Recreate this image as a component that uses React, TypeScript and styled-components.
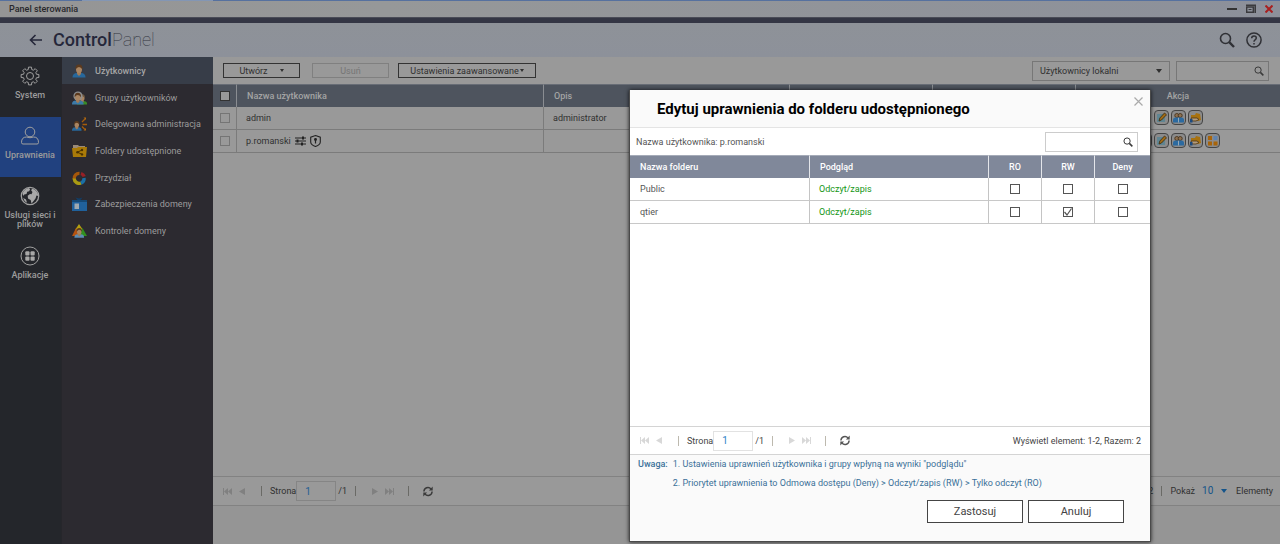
import React from 'react';
import styled, { createGlobalStyle, css } from 'styled-components';

const GlobalStyle = createGlobalStyle`
  *, *::before, *::after { box-sizing: border-box; }
  html, body, #root { margin: 0; padding: 0; }
  body { font-family: Roboto, "Liberation Sans", sans-serif; font-size: 9px; line-height: 12px; color: #303030; background: #959595; }
  button, input, select { font: inherit; color: inherit; margin: 0; padding: 0; border-radius: 0; }
  svg { display: block; flex: none; }
  h1, h2, p { margin: 0; }
`;

/* ---------- window frame ---------- */

const Window = styled.div`
  position: relative;
  min-height: 100vh;
  display: flex;
  flex-direction: column;
`;

const Desktop = styled.div`
  height: 1px;
  background: linear-gradient(90deg, #56719f 0 82px, #8396b4 82px 213px, #56719f 213px);
`;

const TitleBar = styled.header`
  height: 16px;
  padding: 0 7px 0 9px;
  display: flex;
  align-items: center;
  justify-content: space-between;
  color: #28282c;
  font-weight: 500;
  background: linear-gradient(90deg, #959595, #969899 30%, #8c909a);
`;

const WindowButtons = styled.div`
  display: flex;
  align-items: center;
  gap: 9px;
`;

const IconButton = styled.button`
  border: 0;
  background: none;
  display: flex;
  align-items: center;
  justify-content: center;
  color: inherit;
`;

const Band = styled.div`
  height: 6px;
  background: #343644;
  border-top: 1px solid #4a4c57;
`;

const AppBar = styled.div`
  height: 34px;
  padding: 0 18px 0 29px;
  display: flex;
  align-items: center;
  gap: 11px;
  color: #25273a;
  background: linear-gradient(#8e9298, #8d919a);
`;

const Brand = styled.h1`
  flex: 1;
  font-size: 18px;
  line-height: 24px;
  font-weight: 500;
  span { font-weight: 100; color: #34363f; }
`;

const AppBarTools = styled.div`
  display: flex;
  gap: 11px;
  color: #303136;
`;

const Body = styled.div`
  flex: 1;
  display: flex;
`;

/* ---------- navigation ---------- */

const Rail = styled.nav`
  width: 61px;
  flex: none;
  background: #24262b;
`;

const RailLink = styled.a<{ $active?: boolean }>`
  height: 60px;
  padding: 9px 1px 0 0;
  display: flex;
  flex-direction: column;
  align-items: center;
  gap: 5px;
  text-align: center;
  text-decoration: none;
  font-weight: 500;
  line-height: 9px;
  color: #9c9c9c;
  background: ${p => (p.$active ? '#21417f' : 'transparent')};
  span { max-width: 54px; }
`;

const SubNav = styled.nav`
  width: 152px;
  flex: none;
  background: #2c2a30;
  border-left: 1px solid #26262b;
`;

const SubNavList = styled.div`
  height: 187px;
  display: flex;
  flex-direction: column;
`;

const SubNavLink = styled.a<{ $active?: boolean }>`
  flex: 1;
  padding: 1px 0 0 10px;
  display: flex;
  align-items: center;
  gap: 8px;
  white-space: nowrap;
  font-weight: ${p => (p.$active ? 500 : 400)};
  color: ${p => (p.$active ? '#a6a6a6' : '#9c9c9c')};
  text-decoration: none;
  background: ${p => (p.$active ? '#373d48' : 'transparent')};
`;

/* ---------- user list ---------- */

const Main = styled.main`
  flex: 1;
  min-width: 0;
  display: flex;
  flex-direction: column;
  background: #999;
`;

const Toolbar = styled.div`
  height: 27px;
  padding: 0 11px 0 10px;
  display: flex;
  align-items: center;
`;

const ToolButton = styled.button<{ $width: number; $gap: number }>`
  width: ${p => p.$width}px;
  height: 15px;
  border: 1px solid #333;
  background: transparent;
  display: flex;
  align-items: center;
  justify-content: center;
  gap: ${p => p.$gap}px;
  white-space: nowrap;
  margin-right: 9px;
  &:disabled { color: #757575; border-color: #808080; margin-left: 3px; }
`;

const Caret = styled.i<{ $size?: number }>`
  width: 0;
  height: 0;
  flex: none;
  border: solid transparent;
  border-width: ${p => (p.$size ?? 2) + 1}px ${p => p.$size ?? 2}px 0;
  border-top-color: currentColor;
`;

const SelectBox = styled.span`
  width: 138px;
  height: 20px;
  margin: 0 6px 0 auto;
  padding-right: 7px;
  display: flex;
  align-items: center;
  border: 1px solid #777;
`;

const PlainSelect = styled.select`
  flex: 1;
  height: 100%;
  padding-left: 7px;
  border: 0;
  appearance: none;
  background: transparent;
`;

const SearchBox = styled.label<{ $light?: boolean }>`
  width: 93px;
  height: 20px;
  padding-right: 4px;
  display: flex;
  align-items: center;
  border: 1px solid ${p => (p.$light ? '#ccc' : '#777')};
  color: #3a3a3a;
  input { flex: 1; min-width: 0; border: 0; outline: 0; background: transparent; padding-left: 4px; }
`;

const Table = styled.table<{ $light?: boolean }>`
  width: 100%;
  table-layout: fixed;
  border-collapse: separate;
  border-spacing: 0;
  th {
    height: 23px;
    padding: 0 10px;
    text-align: left;
    font-weight: 500;
    color: ${p => (p.$light ? '#fff' : '#a4a4a4')};
    background: ${p => (p.$light ? '#80889a' : '#4e545e')};
    border-top: 1px solid ${p => (p.$light ? '#a5abb8' : '#686d76')};
  }
  th + th { border-left: 1px solid ${p => (p.$light ? '#e4e6ea' : '#8a8d92')}; }
  td {
    height: 23px;
    padding: 0 9px;
    border-bottom: 1px solid ${p => (p.$light ? '#c8c8c8' : '#7b7b7b')};
    color: ${p => (p.$light ? '#555' : '#303030')};
  }
  td:first-child { padding-left: 10px; }
  td + td { border-left: 1px solid ${p => (p.$light ? '#c4c4c4' : '#7b7b7b')}; }
  th.center { padding: 0; text-align: center; }
  th.tick, td.tick { padding: 0 0 0 7px; }
  td.actions { padding: 0 0 2px; border-left: 0; }
`;

const Check = styled.input.attrs({ type: 'checkbox' })<{ $tone: 'head' | 'dim' | 'light' }>`
  appearance: none;
  width: 10px;
  height: 10px;
  display: block;
  border: 1px solid #757575;
  ${p => p.$tone === 'head' && css`background: #999; border-color: #333;`}
  ${p => p.$tone === 'light' && css`border-color: #555; background: #fff;`}
`;

const CheckSlot = styled.span`
  display: grid;
  place-content: center;
  place-items: center;
  > * { grid-area: 1 / 1; }
  svg { pointer-events: none; z-index: 1; }
`;

const UserName = styled.span`
  display: flex;
  align-items: center;
  gap: 4px;
`;

const Actions = styled.div`
  display: grid;
  grid-template-columns: repeat(5, 15px);
  gap: 2px;
  padding-left: 62px;
`;

const ActionButton = styled.button<{ $slot: number }>`
  grid-row: 1;
  grid-column: ${p => p.$slot};
  width: 15px;
  height: 15px;
  border: 1px solid #454545;
  border-radius: 4px;
  background: #8b8b8b;
  display: flex;
  align-items: center;
  justify-content: center;
`;

const PagerBar = styled.div<{ $light?: boolean }>`
  height: ${p => (p.$light ? 29 : 30)}px;
  margin-top: auto;
  padding: 0 ${p => (p.$light ? 9 : 7)}px 0 10px;
  display: flex;
  align-items: center;
  border: solid ${p => (p.$light ? '#d4d4d4' : '#828282')};
  border-width: 1px 0;
  white-space: nowrap;
  color: ${p => (p.$light ? '#444' : '#303030')};
`;

const PageStep = styled(IconButton)<{ $light?: boolean }>`
  width: 9px;
  height: 12px;
  margin-right: 6px;
  color: ${p => (p.$light ? '#d8d8d8' : '#808080')};
`;

const Separator = styled.i<{ $light?: boolean }>`
  width: 1px;
  height: 10px;
  margin: 0 8px;
  background: ${p => (p.$light ? '#bdb9ae' : '#6a6a66')};
`;

const Gap = styled.span`
  width: 6px;
`;

const PageField = styled.label`
  display: flex;
  align-items: center;
`;

const PageInput = styled.input<{ $light?: boolean }>`
  width: 40px;
  height: 20px;
  margin-right: 2px;
  padding-left: 8px;
  border: 1px solid ${p => (p.$light ? '#e2e2e2' : '#858585')};
  background: transparent;
  color: ${p => (p.$light ? '#2a83c8' : '#1f5f94')};
  font-size: 10px;
`;

const PagerEnd = styled.div`
  margin-left: auto;
  display: flex;
  align-items: center;
`;

const CountSelect = styled.label`
  display: flex;
  align-items: center;
  gap: 7px;
  margin-right: 9px;
  select { border: 0; appearance: none; background: transparent; color: #14548a; font-size: 10px; width: 12px; }
  i { color: #14548a; }
`;

const BottomSpace = styled.div`
  height: 38px;
  background: #959595;
`;

/* ---------- dialog ---------- */

const Dialog = styled.section`
  position: absolute;
  top: 90px;
  right: 129px;
  bottom: 2px;
  width: 522px;
  min-height: 440px;
  display: flex;
  flex-direction: column;
  background: #fff;
  border: solid #4a4a4a;
  border-width: 0 1px 1px;
  box-shadow: 0 0 4px rgba(0, 0, 0, 0.8);
`;

const DialogHead = styled.div`
  height: 38px;
  padding: 0 7px 0 27px;
  display: flex;
  justify-content: space-between;
  align-items: center;
  background: #fafafa;
  border-bottom: 1px solid #e4e4e4;
  color: #000;
  h2 { font-size: 15px; line-height: 20px; font-weight: 700; }
`;

const CloseButton = styled(IconButton)`
  align-self: flex-start;
  margin-top: 7px;
  color: #aaa;
`;

const DialogTools = styled.div`
  height: 27px;
  padding: 0 12px 0 6px;
  display: flex;
  align-items: center;
  justify-content: space-between;
  color: #555;
`;

const Access = styled.span`
  color: #149614;
`;

const DialogFoot = styled.div`
  height: 86px;
  padding: 2px 26px 0 8px;
  background: #fafafa;
`;

const Note = styled.div`
  display: flex;
  gap: 5px;
  line-height: 14px;
  color: #3a7199;
  strong { font-weight: 500; }
  p { margin-bottom: 5px; }
`;

const DialogButtons = styled.div`
  display: flex;
  justify-content: flex-end;
  gap: 5px;
  margin-top: 5px;
`;

const DialogButton = styled.button`
  width: 96px;
  height: 23px;
  border: 1px solid #444;
  background: #fff;
  color: #444;
  font-size: 11px;
`;

/* ---------- drawings ---------- */

const Magnifier = ({ size }: { size: number }) => (
  <svg width={size} height={size} viewBox="0 0 16 16" fill="none" stroke="currentColor">
    <circle cx="6.5" cy="6.5" r="5" strokeWidth="1.6" />
    <path d="M10.2 10.2 15 15" strokeWidth="2.4" />
  </svg>
);

const PersonShape = ({ x = 0, s = 1, body = '#27689c', hair = '#5b3a1e' }) => (
  <g transform={`translate(${x} ${14 - 14 * s}) scale(${s})`}>
    <path d="M.5 13.500q0-4.500 4.500-4.500h4q4.500 0 4.500 4.500z" fill={body} />
    <path d="M5 8h4v2l-2 2-2-2z" fill="#a17a58" />
    <ellipse cx="7" cy="5.500" rx="3" ry="3.500" fill="#a98562" />
    <path d="M3.500 5.500q-.5-5 3.500-5t3.500 5q-1.500-2.500-3.500-2.500T3.500 5.500z" fill={hair} />
  </g>
);

const menuIcons: Record<string, React.ReactNode> = {
  user: <PersonShape />,
  group: (
    <>
      <PersonShape x={4.5} s={0.8} body="#398a27" hair="#6e5840" />
      <ellipse cx="6" cy="5" rx="4.600" ry="4.600" fill="#8f8f8f" />
      <PersonShape x={-0.5} s={0.9} body="#3c7aa8" />
    </>
  ),
  delegate: (
    <>
      <PersonShape x={-0.5} s={0.75} />
      <path d="M10 5l3-3M10.500 7.500H15M10 9.500l3 3" stroke="#a55c0a" strokeWidth="1.300" />
      <path d="M11.500.5H14V3zM11.500 13.500H14V11z" fill="#b36a10" />
    </>
  ),
  folder: (
    <>
      <path d="M1 1h5l1 1h6v4H1z" fill="#9b8a77" />
      <path d="M0 4h5l1-1h9l-1 10H1z" fill="#a97a08" />
      <path d="M10 6 5.500 8.200 10 10.400" fill="none" stroke="#4a3200" />
      <circle cx="10" cy="6" r="1.200" fill="#4a3200" />
      <circle cx="5.500" cy="8.200" r="1.300" fill="#4a3200" />
      <circle cx="10" cy="10.400" r="1.200" fill="#4a3200" />
    </>
  ),
  quota: (
    <g fill="none" strokeWidth="3.400">
      <path d="M2.200 8A5 5 0 0 1 7.500 2.400" stroke="#a5570a" />
      <path d="M2.200 7.500A5 5 0 0 0 9 12" stroke="#a99a13" />
      <path d="M9 12.200A5 5 0 0 0 12 7" stroke="#1a6fa5" />
      <path d="M9 2.500A5 5 0 0 1 12.200 5.500" stroke="#972026" />
    </g>
  ),
  security: (
    <>
      <path d="M5.500 3 3.500.5 7 1.600 10.500.5 8.500 3z" fill="#123d66" />
      <path d="M0 3h15v11H0z" fill="#20619c" />
      <path d="M0 3h15v2H0z" fill="#154875" />
      <path d="M2.500 6.500h4.500V12H2.500z" fill="#9fa9b0" />
    </>
  ),
  controller: (
    <>
      <path d="M7 0l4 6H3z" fill="#b5a010" />
      <path d="M4 4 8 12H0z" fill="#b5530f" />
      <path d="M10.500 4 15 12H7z" fill="#318f1e" />
      <PersonShape x={2} s={0.75} body="#5b8db5" />
    </>
  ),
};

const MenuIcon = ({ name }: { name: string }) => (
  <svg width="15" height="14" viewBox="0 0 15 14">{menuIcons[name]}</svg>
);

const gearPath = (() => {
  const pts: string[] = [];
  for (let i = 0; i < 8; i++) {
    [[-0.26, 6.7], [-0.17, 9], [0.17, 9], [0.26, 6.7]].forEach(([a, r]) => {
      const t = (i * Math.PI) / 4 + a;
      pts.push(`${(10 + r * Math.sin(t)).toFixed(2)} ${(10 - r * Math.cos(t)).toFixed(2)}`);
    });
  }
  return `M${pts.join('L')}Z`;
})();

const railIcons: Record<string, React.ReactNode> = {
  gear: (
    <>
      <path d={gearPath} strokeLinejoin="round" />
      <circle cx="10" cy="10" r="3.500" />
    </>
  ),
  person: (
    <>
      <circle cx="10" cy="6" r="4.800" />
      <path d="M1.500 16.500q0-5.500 5-5.500 3.500 1.500 7 0 5 0 5 5.500 0 1.500-1.500 1.500H3q-1.500 0-1.500-1.500z" />
    </>
  ),
  globe: (
    <>
      <circle cx="10" cy="10" r="8.700" strokeWidth="1.300" />
      <path d="M2.500 7.500Q4 3 8.500 2l1.700 1-1 2.200-2 .6L6.500 8l-2.300.5L3.500 10zM12 2.500q4 1 5.800 5L18.300 10l-1.800-.5-1 3-2.500 3.200-1.500 1.800-.8-3.500L8 12.500l-.3-2.700L10 8l1.500.3L12.500 6l-1.300-1.500zM3.200 12l2.800 1.500 1 3.200-2.300-1.500z" fill="#a8a8a8" stroke="none" />
    </>
  ),
  apps: (
    <>
      <circle cx="10" cy="10" r="9" />
      <g fill="#a8a8a8" stroke="none">
        <rect x="5.300" y="5.300" width="4.200" height="4.200" rx="1" />
        <rect x="10.500" y="5.300" width="4.200" height="4.200" rx="1" />
        <rect x="5.300" y="10.500" width="4.200" height="4.200" rx="1" />
        <rect x="10.500" y="10.500" width="4.200" height="4.200" rx="1" />
      </g>
    </>
  ),
};

const RailIcon = ({ name }: { name: string }) => (
  <svg width="20" height="20" viewBox="0 0 20 20" fill="none" stroke="#a0a0a0" strokeWidth="1">
    {railIcons[name]}
  </svg>
);

const actionIcons: Record<string, React.ReactNode> = {
  edit: (
    <>
      <path d="M1 2h8v8H1z" fill="#5f8592" />
      <path d="M3 9l.8-3L8.500 1l2 1.800L5.500 8z" fill="#a06a14" stroke="#3a2a10" strokeWidth=".8" />
    </>
  ),
  group: (
    <>
      <circle cx="3.800" cy="3.500" r="2" fill="#8f7150" stroke="#4d3a24" />
      <circle cx="7.200" cy="3.500" r="2" fill="#8f7150" stroke="#4d3a24" />
      <path d="M0 10.500V8q0-2.500 2.500-2.500h6Q11 5.500 11 8v2.500z" fill="#2c6aa0" />
      <path d="M5.500 6v4.500" stroke="#94a9b8" />
    </>
  ),
  folder: (
    <>
      <path d="M1 3h4l1-2 4 1 1 6-3 1H1z" fill="#a8720f" />
      <path d="M1 6h6l2 1.500-3 1.500H2z" fill="#b59b78" stroke="#48331a" strokeWidth=".8" />
      <path d="M0 7h2.500v3.500H0z" fill="#1c4a80" />
    </>
  ),
  apps: (
    <>
      <path d="M1 1h4v4H1zM1 6.500h4v4H1zM6.500 6.500h4v4h-4z" fill="#a8640a" />
      <path d="M6.500 1h4v4h-4z" fill="#5f83b0" />
    </>
  ),
  key: <path d="M2 5h7M6 5v3" stroke="#a8720f" strokeWidth="2" />,
};

const ActionIcon = ({ name, slot, label }: { name: string; slot: number; label: string }) => (
  <ActionButton $slot={slot} aria-label={label}>
    <svg width="11" height="11" viewBox="0 0 11 11">{actionIcons[name]}</svg>
  </ActionButton>
);

/* ---------- parts ---------- */

const Pager = ({ light, children }: { light?: boolean; children: React.ReactNode }) => (
  <PagerBar $light={light}>
    <PageStep $light={light} aria-label="Pierwsza strona">
      <svg width="9" height="7" viewBox="0 0 9 7" fill="currentColor"><path d="M0 0h1v7H0zM5 0v7L1 3.500zM9 0v7L5 3.500z" /></svg>
    </PageStep>
    <PageStep $light={light} aria-label="Poprzednia strona">
      <svg width="7" height="7" viewBox="0 0 7 7" fill="currentColor"><path d="M6 0v7L0 3.500z" /></svg>
    </PageStep>
    <Separator $light={light} />
    <PageField>
      Strona
      <PageInput $light={light} defaultValue="1" />
    </PageField>
    /1
    <Separator $light={light} />
    <Gap />
    <PageStep $light={light} aria-label="Następna strona">
      <svg width="7" height="7" viewBox="0 0 7 7" fill="currentColor"><path d="M1 0v7l6-3.500z" /></svg>
    </PageStep>
    <PageStep $light={light} aria-label="Ostatnia strona">
      <svg width="9" height="7" viewBox="0 0 9 7" fill="currentColor"><path d="M8 0h1v7H8zM4 0v7l4-3.500zM0 0v7l4-3.500z" /></svg>
    </PageStep>
    <Separator $light={light} />
    <Gap />
    <IconButton aria-label="Odśwież">
      <svg width="10" height="11" viewBox="0 0 10 11" fill="none" stroke={light ? '#555' : '#3a3a3a'} strokeWidth="1.400">
        <path d="M.9 5.500A4 4 0 0 1 8 3M9.100 5.500A4 4 0 0 1 2 8" />
        <path d="M9.700.6v3.900H5.900zM.3 10.400V6.500h3.800z" fill={light ? '#555' : '#3a3a3a'} stroke="none" />
      </svg>
    </IconButton>
    <PagerEnd>{children}</PagerEnd>
  </PagerBar>
);

const rail = [
  { icon: 'gear', label: 'System' },
  { icon: 'person', label: 'Uprawnienia', active: true },
  { icon: 'globe', label: 'Usługi sieci i plików' },
  { icon: 'apps', label: 'Aplikacje' },
];

const menu = [
  { icon: 'user', label: 'Użytkownicy', active: true },
  { icon: 'group', label: 'Grupy użytkowników' },
  { icon: 'delegate', label: 'Delegowana administracja' },
  { icon: 'folder', label: 'Foldery udostępnione' },
  { icon: 'quota', label: 'Przydział' },
  { icon: 'security', label: 'Zabezpieczenia domeny' },
  { icon: 'controller', label: 'Kontroler domeny' },
];

const folders = [
  { name: 'Public', access: 'Odczyt/zapis', granted: '' },
  { name: 'qtier', access: 'Odczyt/zapis', granted: 'RW' },
];

const modes = ['RO', 'RW', 'Deny'];

export default function App() {
  return (
    <Window>
      <GlobalStyle />
      <Desktop />
      <TitleBar>
        Panel sterowania
        <WindowButtons>
          <IconButton aria-label="Minimalizuj">
            <svg width="10" height="10" viewBox="0 0 10 10"><path d="M0 4h10v2H0z" fill="#333" /></svg>
          </IconButton>
          <IconButton aria-label="Przywróć">
            <svg width="10" height="10" viewBox="0 0 10 10" fill="none" stroke="#3a3a3d">
              <path d="M.7 3h6.600v5.300H.7z" strokeWidth="1.400" />
              <path d="M0 1.200h9.200V9" strokeWidth="1.600" />
              <path d="M2.500 5.500h3" />
            </svg>
          </IconButton>
          <IconButton aria-label="Zamknij">
            <svg width="8" height="8" viewBox="0 0 8 8"><path d="M.5.5l7 7M7.500.5l-7 7" stroke="#a82020" strokeWidth="2" /></svg>
          </IconButton>
        </WindowButtons>
      </TitleBar>
      <Band />
      <AppBar>
        <IconButton aria-label="Wstecz">
          <svg width="13" height="12" viewBox="0 0 13 12" fill="none" stroke="currentColor" strokeWidth="1.600">
            <path d="M6.500 1 1.500 6l5 5M1.500 6H13" />
          </svg>
        </IconButton>
        <Brand>Control<span>Panel</span></Brand>
        <AppBarTools>
          <IconButton aria-label="Szukaj"><Magnifier size={16} /></IconButton>
          <IconButton aria-label="Pomoc">
            <svg width="16" height="16" viewBox="0 0 16 16" fill="none" stroke="currentColor" strokeWidth="1.500">
              <circle cx="8" cy="8" r="7.100" />
              <path d="M5.700 6.300q0-2.300 2.300-2.300t2.300 2q0 1-1.200 1.800T8 9.700M8 10.900v1.500" />
            </svg>
          </IconButton>
        </AppBarTools>
      </AppBar>
      <Body>
        <Rail>
          {rail.map(r => (
            <RailLink key={r.icon} href="#" $active={r.active}>
              <RailIcon name={r.icon} />
              <span>{r.label}</span>
            </RailLink>
          ))}
        </Rail>
        <SubNav>
          <SubNavList>
            {menu.map(m => (
              <SubNavLink key={m.icon} href="#" $active={m.active}>
                <MenuIcon name={m.icon} />
                {m.label}
              </SubNavLink>
            ))}
          </SubNavList>
        </SubNav>
        <Main>
          <Toolbar>
            <ToolButton $width={77} $gap={12}>Utwórz <Caret /></ToolButton>
            <ToolButton $width={77} $gap={0} disabled>Usuń</ToolButton>
            <ToolButton $width={138} $gap={1}>Ustawienia zaawansowane<Caret /></ToolButton>
            <SelectBox>
              <PlainSelect aria-label="Rodzaj użytkowników">
                <option>Użytkownicy lokalni</option>
              </PlainSelect>
              <Caret $size={3} />
            </SelectBox>
            <SearchBox>
              <input aria-label="Szukaj użytkownika" />
              <Magnifier size={10} />
            </SearchBox>
          </Toolbar>
          <Table>
            <colgroup>
              <col width="23" />
              <col width="307" />
              <col width="246" />
              <col width="143" />
              <col width="143" />
              <col />
            </colgroup>
            <thead>
              <tr>
                <th className="tick"><Check $tone="head" aria-label="Zaznacz wszystkich" /></th>
                <th>Nazwa użytkownika</th>
                <th>Opis</th>
                <th aria-label="Przydział" />
                <th aria-label="Stan" />
                <th className="center">Akcja</th>
              </tr>
            </thead>
            <tbody>
              <tr>
                <td className="tick"><Check $tone="dim" aria-label="admin" /></td>
                <td>admin</td>
                <td>administrator</td>
                <td />
                <td />
                <td className="actions">
                  <Actions>
                    <ActionIcon name="edit" slot={2} label="Edytuj profil konta" />
                    <ActionIcon name="group" slot={3} label="Edytuj grupy użytkownika" />
                    <ActionIcon name="folder" slot={4} label="Edytuj uprawnienia do folderu" />
                  </Actions>
                </td>
              </tr>
              <tr>
                <td className="tick"><Check $tone="dim" aria-label="p.romanski" /></td>
                <td>
                  <UserName>
                    p.romanski
                    <svg width="11" height="10" viewBox="0 0 11 10" fill="none" stroke="#222" strokeWidth="1.200">
                      <path d="M0 2h11M0 5h11M0 8h11" />
                      <path d="M8 .5v3M2.500 3.500v3M7 6.500v3" strokeWidth="2" />
                    </svg>
                    <svg width="11" height="12" viewBox="0 0 11 12" fill="none" stroke="#222" strokeWidth="1.100">
                      <path d="M5.500.6 10.300 2.200V7q0 2.800-4.800 4.500Q.7 9.800.7 7V2.200z" />
                      <circle cx="5.500" cy="4.500" r=".9" fill="#222" />
                      <path d="M5.500 5v3.500" strokeWidth="1.200" />
                    </svg>
                  </UserName>
                </td>
                <td />
                <td />
                <td />
                <td className="actions">
                  <Actions>
                    <ActionIcon name="key" slot={1} label="Zmień hasło" />
                    <ActionIcon name="edit" slot={2} label="Edytuj profil konta" />
                    <ActionIcon name="group" slot={3} label="Edytuj grupy użytkownika" />
                    <ActionIcon name="folder" slot={4} label="Edytuj uprawnienia do folderu" />
                    <ActionIcon name="apps" slot={5} label="Edytuj uprawnienia aplikacji" />
                  </Actions>
                </td>
              </tr>
            </tbody>
          </Table>
          <Pager>
            2
            <Separator />
            <CountSelect>
              Pokaż
              <select aria-label="Pokaż"><option>10</option></select>
              <Caret $size={3} />
            </CountSelect>
            Elementy
          </Pager>
          <BottomSpace />
        </Main>
      </Body>
      <Dialog role="dialog" aria-labelledby="dialog-title">
        <DialogHead>
          <h2 id="dialog-title">Edytuj uprawnienia do folderu udostępnionego</h2>
          <CloseButton aria-label="Zamknij okno">
            <svg width="9" height="9" viewBox="0 0 9 9"><path d="M.5.5l8 8M8.500.5l-8 8" stroke="currentColor" strokeWidth="1.200" /></svg>
          </CloseButton>
        </DialogHead>
        <DialogTools>
          Nazwa użytkownika: p.romanski
          <SearchBox $light>
            <input aria-label="Szukaj folderu" />
            <Magnifier size={10} />
          </SearchBox>
        </DialogTools>
        <Table $light>
          <colgroup>
            <col />
            <col width="179" />
            <col width="53" />
            <col width="53" />
            <col width="56" />
          </colgroup>
          <thead>
            <tr>
              <th>Nazwa folderu</th>
              <th>Podgląd</th>
              {modes.map(m => <th key={m} className="center">{m}</th>)}
            </tr>
          </thead>
          <tbody>
            {folders.map(f => (
              <tr key={f.name}>
                <td>{f.name}</td>
                <td><Access>{f.access}</Access></td>
                {modes.map(m => (
                  <td key={m}>
                    <CheckSlot>
                      <Check $tone="light" aria-label={`${f.name} ${m}`} defaultChecked={f.granted === m} />
                      {f.granted === m && (
                        <svg width="8" height="8" viewBox="0 0 8 8" fill="none" stroke="#555" strokeWidth="1.200">
                          <path d="M.5 4 3 7 7.500.5" />
                        </svg>
                      )}
                    </CheckSlot>
                  </td>
                ))}
              </tr>
            ))}
          </tbody>
        </Table>
        <Pager light>Wyświetl element: 1-2, Razem: 2</Pager>
        <DialogFoot>
          <Note>
            <strong>Uwaga:</strong>
            <div>
              <p>1. Ustawienia uprawnień użytkownika i grupy wpłyną na wyniki "podglądu"</p>
              <p>2. Priorytet uprawnienia to Odmowa dostępu (Deny) &gt; Odczyt/zapis (RW) &gt; Tylko odczyt (RO)</p>
            </div>
          </Note>
          <DialogButtons>
            <DialogButton>Zastosuj</DialogButton>
            <DialogButton>Anuluj</DialogButton>
          </DialogButtons>
        </DialogFoot>
      </Dialog>
    </Window>
  );
}
